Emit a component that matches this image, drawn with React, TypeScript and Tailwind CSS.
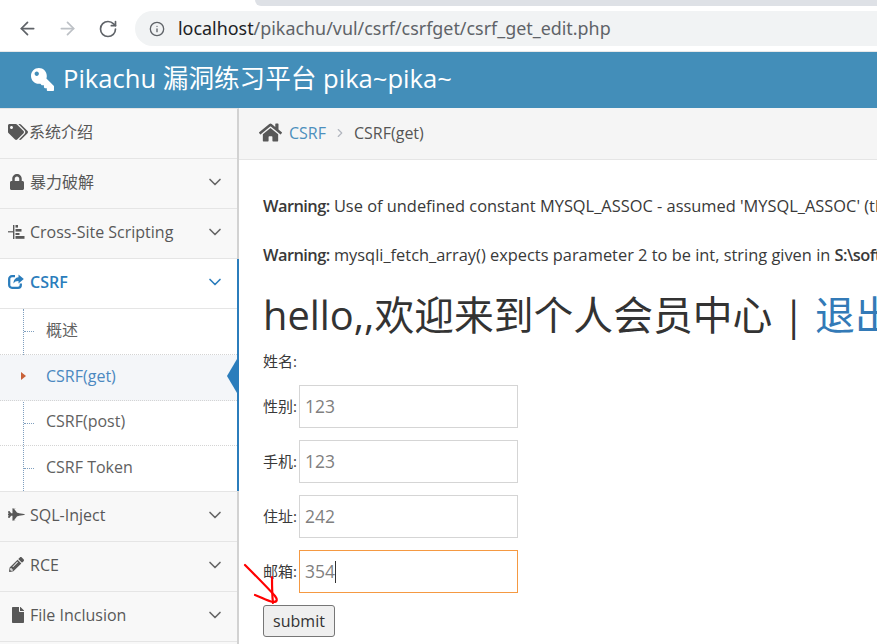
import React from "react";
import { FaTags, FaLock, FaFighterJet, FaPencilAlt, FaFile, FaHome, FaKey } from "react-icons/fa";
import { ArrowLeft, ArrowRight, RotateCw, Info, ChevronDown, ChevronRight } from "lucide-react";

const font = "font-['Open_Sans','Noto_Sans_CJK_SC',sans-serif]";

function XssIcon() {
  return (
    <svg width="18" height="16" viewBox="0 0 18 16" className="text-[#585858]" fill="currentColor">
      <rect x="0" y="7.2" width="5" height="1.2" />
      <rect x="5" y="1" width="1.4" height="14" />
      <rect x="7.5" y="1" width="2.5" height="2.6" />
      <rect x="7.5" y="5" width="6" height="2.6" />
      <rect x="7.5" y="9" width="4" height="2" />
      <rect x="7.5" y="12" width="9" height="2.8" />
    </svg>
  );
}

function ShareIcon() {
  return (
    <svg width="16" height="15" viewBox="0 0 16 15" fill="none" className="text-[#2b7dbc]">
      <path d="M7 2.2H4A2.8 2.8 0 0 0 1.2 5v6A2.8 2.8 0 0 0 4 13.8h6A2.8 2.8 0 0 0 12.8 11V9.5" stroke="currentColor" strokeWidth="2.3" />
      <path d="M10.5 0.5 L15.8 5 L10.5 9.5 V7 C8 7 6.5 7.8 5.5 9.5 C5.5 6 7.5 3.4 10.5 3.2 Z" fill="currentColor" />
    </svg>
  );
}

function TopItem({ icon, label, active, chevron = true, gap = "gap-[2px]" }: { icon: React.ReactNode; label: string; active?: boolean; chevron?: boolean; gap?: string }) {
  return (
    <div className={`h-[50px] flex items-center pl-[8px] pr-[12px] pb-[4px] border-b border-[#e5e5e5] ${active ? "bg-white text-[#2b7dbc] font-semibold" : "bg-[#f8f8f8] text-[#585858]"}`}>
      <span className={`flex items-center ${gap} flex-1 text-[16px]`}>
        <span className="w-[20px] flex justify-start">{icon}</span>
        <span>{label}</span>
      </span>
      {chevron && <ChevronDown size={20} strokeWidth={2} className={active ? "text-[#2b7dbc]" : "text-[#666]"} />}
    </div>
  );
}

function SubItem({ label, active, h, border = true }: { label: string; active?: boolean; h: string; border?: boolean }) {
  return (
    <div className={`relative flex items-center pl-[46px] pb-[4px] ${h} ${border ? "border-b border-dotted border-[#d4d4d4]" : ""} ${active ? "bg-[#f4f6f9] text-[#4b88c0]" : "bg-transparent text-[#616161]"} text-[16px]`}>
      {!active && <span className="absolute left-[24px] top-[22px] w-[10px] border-t border-dotted border-[#7f9fbf]" />}
      {active && <span className="absolute left-[21px] top-[21px] -translate-y-1/2 w-0 h-0 border-y-[4px] border-y-transparent border-l-[5px] border-l-[#c86139]" />}
      {active && <span className="absolute right-0 top-[21px] -translate-y-1/2 w-0 h-0 border-y-[17px] border-y-transparent border-r-[10px] border-r-[#2b7dbc]" />}
      {label}
    </div>
  );
}

function Field({ label, value, focus }: { label: string; value: string; focus?: boolean }) {
  return (
    <div className="flex items-center h-[43px] mb-[12px]">
      <span className="text-[15px] text-[#393939] w-[36px] whitespace-nowrap">{label}</span>
      <div className={`w-[219px] h-[43px] bg-white border flex items-center pl-[5px] text-[17.5px] text-[#7f7f7f] ${focus ? "border-[#f59942]" : "border-[#d5d5d5]"}`}>
        {value}
        {focus && <span className="inline-block w-px h-[22px] bg-[#333]" />}
      </div>
    </div>
  );
}

export default function App() {
  return (
    <div className={`relative w-[877px] h-[644px] overflow-hidden bg-white flex flex-col ${font}`}>
      <div className="h-[6px] flex shrink-0">
        <div className="w-[255px] bg-white" />
        <div className="flex-1 bg-[#dee1e6] rounded-bl-[6px]" />
      </div>
      <div className="h-[45px] bg-white flex items-center shrink-0 pl-[17px]">
        <ArrowLeft size={21} strokeWidth={2} className="text-[#5f6368]" />
        <ArrowRight size={21} strokeWidth={2} className="text-[#bdc1c6] ml-[19px]" />
        <RotateCw size={20} strokeWidth={2} className="text-[#5f6368] ml-[20px]" />
        <div className="ml-[17px] flex-1 h-[35px] bg-[#f1f3f4] rounded-l-[18px] flex items-center pl-[14px]">
          <Info size={16} strokeWidth={2} className="text-[#5f6368]" />
          <span className="ml-[13px] text-[17.9px] text-[#5f6368] font-['Noto_Sans',sans-serif]"><span className="text-[#202124]">localhost</span>/pikachu/vul/csrf/csrfget/csrf_get_edit.php</span>
        </div>
      </div>
      <div className="h-px bg-[#e8e8e8] shrink-0" />
      <div className="h-[56px] bg-[#438eb9] flex items-center pl-[31px] pb-[2px] text-white text-[25.6px] shrink-0 gap-[9px]">
        <FaKey size={23} className="-scale-x-100" />
        <span>Pikachu 漏洞练习平台 pika~pika~</span>
      </div>
      <div className="flex flex-1 min-h-0">
        <div className="w-[239px] shrink-0 flex flex-col">
          <div className="border-r-2 border-[#d2d2d2] border-t border-t-[#e5e5e5]">
            <TopItem icon={<FaTags size={20} className="text-[#585858]" />} label="系统介绍" chevron={false} gap="gap-[1px]" />
            <TopItem icon={<FaLock size={16} className="text-[#585858] ml-[1px]" />} label="暴力破解" />
            <TopItem icon={<XssIcon />} label="Cross-Site Scripting" />
          </div>
          <div className="border-r-2 border-[#2b7dbc]">
            <TopItem icon={<ShareIcon />} label="CSRF" active />
            <div className="relative bg-white">
              <span className="absolute left-[23px] top-0 bottom-0 border-l border-dotted border-[#7f9fbf]" />
              <SubItem label="概述" h="h-[46px]" />
              <SubItem label="CSRF(get)" active h="h-[46px]" />
              <SubItem label="CSRF(post)" h="h-[45px]" />
              <SubItem label="CSRF Token" h="h-[45px]" border={false} />
            </div>
          </div>
          <div className="border-r-2 border-[#d2d2d2] flex-1 bg-[#f8f8f8] border-t border-t-[#e5e5e5]">
            <TopItem icon={<FaFighterJet size={17} className="text-[#585858]" />} label="SQL-Inject" />
            <TopItem icon={<FaPencilAlt size={15} className="text-[#585858] ml-[1px]" />} label="RCE" />
            <TopItem icon={<FaFile size={16} className="text-[#585858] ml-[2px]" />} label="File Inclusion" />
          </div>
        </div>
        <div className="flex-1 min-w-0 overflow-hidden">
          <div className="h-[52px] bg-[#f5f5f5] border-b border-[#e5e5e5] flex items-center pl-[20px] pb-[2px] text-[16px]">
            <FaHome size={23} className="text-[#585858]" />
            <span className="ml-[7px] text-[#4c8fbd]">CSRF</span>
            <ChevronRight size={14} className="text-[#b2b6bf] mx-[7px]" />
            <span className="text-[#555555]">CSRF(get)</span>
          </div>
          <div className="pl-[24px] text-[#393939] whitespace-nowrap">
            <p className="mt-[34px] h-[24px] leading-[24px] text-[16.4px]"><b className="font-semibold tracking-[-0.55px]">Warning:</b> Use of undefined constant MYSQL_ASSOC - assumed 'MYSQL_ASSOC' (this will throw an Error)</p>
            <p className="mt-[25px] h-[24px] leading-[24px] text-[16.4px]"><b className="font-semibold tracking-[-0.55px]">Warning:</b> mysqli_fetch_array() expects parameter 2 to be int, string given in <b className="font-semibold tracking-[-0.55px]">S:\software\phpstudy</b></p>
            <h1 className="mt-[23px] h-[50px] leading-[50px] text-[39.8px] text-[#333]">hello,,欢迎来到个人会员中心 | <span className="text-[#337ab7]">退出登录</span></h1>
            <div className="mt-[9px] h-[24px] leading-[24px] text-[15px]">姓名:</div>
            <div className="mt-[12px]">
              <Field label="性别:" value="123" />
              <Field label="手机:" value="123" />
              <Field label="住址:" value="242" />
              <Field label="邮箱:" value="354" focus />
            </div>
            <button className="relative block h-[32px] w-[72px] bg-[#efefef] border border-[#767676] rounded-[3px] text-[16px] text-[#333] leading-none">submit</button>
          </div>
        </div>
      </div>
      <svg className="absolute left-[243px] top-[563px]" width="40" height="46" viewBox="0 0 40 46" fill="none" stroke="#f00" strokeWidth="2.2" strokeLinecap="round" strokeLinejoin="round">
        <path d="M2 2 C10 10 24 24 32 33 C35 37 34 39 30 39 C24 38 18 34 12 32" />
        <path d="M29 14 C29 22 29 32 30 40" />
      </svg>
    </div>
  );
}
